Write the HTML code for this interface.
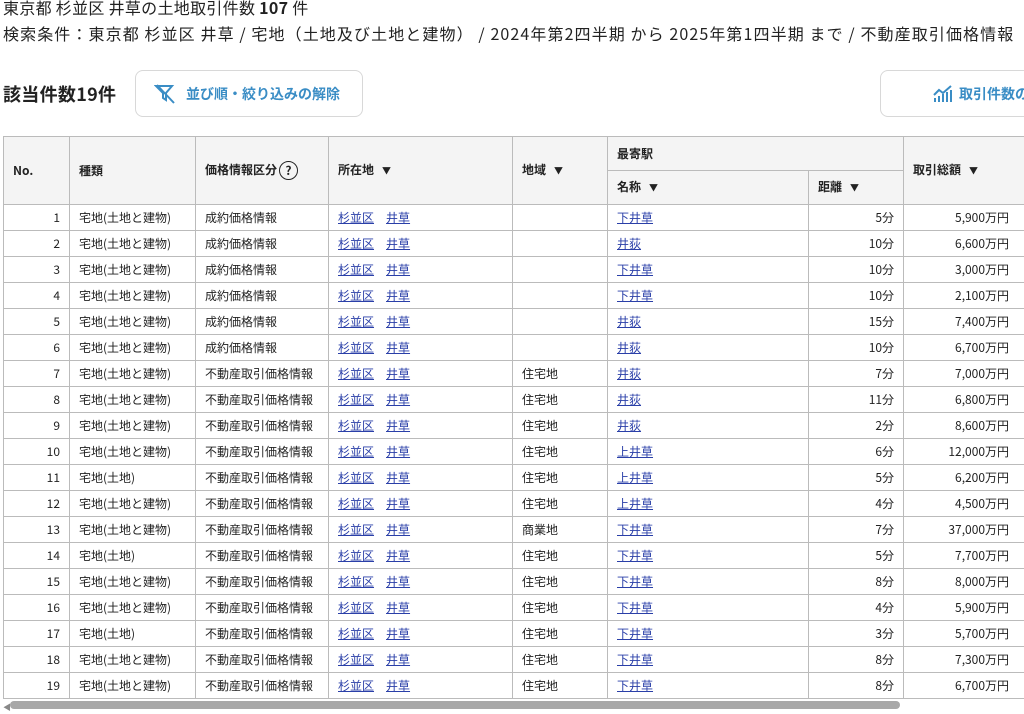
<!DOCTYPE html><html><head><meta charset="utf-8"><style>
body{margin:0;width:1024px;height:714px;overflow:hidden;background:#fff;font-family:"Noto Sans CJK JP","Liberation Sans",sans-serif;color:#222;position:relative}
.t1{position:absolute;left:3px;top:-3px;font-size:16px;line-height:20px;white-space:nowrap;letter-spacing:0.3px}
.t2{position:absolute;left:3px;top:23px;font-size:16px;line-height:20px;white-space:nowrap;letter-spacing:1.1px}
.h{position:absolute;left:3px;top:81px;font-size:18px;font-weight:bold;line-height:26px;letter-spacing:0.3px}
.btn{position:absolute;top:70px;height:47px;border:1px solid #d8d8d8;border-radius:8px;background:#fff;color:#3a8dc5;font-weight:bold;font-size:14px;display:flex;align-items:center;box-sizing:border-box;white-space:nowrap}
table{position:absolute;left:3px;top:136px;width:1022px;border-collapse:collapse;font-size:12px;table-layout:fixed;line-height:16px}
td,th{border:1px solid #bbb;padding:0 9px;height:25px;white-space:nowrap;overflow:hidden}
th{background:#f4f4f4;text-align:left;font-weight:bold;height:33px}
td.r{text-align:right}
td.last{padding-right:16px}
a{color:#2a3fa8;text-decoration:underline}
.c{font-size:9px;margin-left:8px}
.sb{position:absolute;left:10px;top:701px;width:890px;height:8px;background:#a8a8a8;border-radius:4px}
</style></head><body>
<div class="t1">東京都 杉並区 井草の土地取引件数 <b>107</b> 件</div>
<div class="t2">検索条件：東京都 杉並区 井草 / 宅地（土地及び土地と建物） / 2024年第2四半期 から 2025年第1四半期 まで / 不動産取引価格情報</div>
<div class="h">該当件数19件</div>
<div class="btn" style="left:135px;width:228px;padding-left:18px"><svg width="22" height="20" viewBox="0 0 22 20" style="margin-right:10px"><path d="M2 2h16l-6 7v7l-3-2V9z" fill="none" stroke="#3a8dc5" stroke-width="2"/><path d="M3 1l17 18" stroke="#3a8dc5" stroke-width="2"/></svg>並び順・絞り込みの解除</div>
<div class="btn" style="left:880px;width:160px;padding-left:52px"><svg width="20" height="18" viewBox="0 0 20 18" style="margin-right:6px"><path d="M2 17v-4M6 17v-6M10 17v-8M14 17v-10M18 17v-12M1 10l5-5 4 3 8-7" stroke="#3a8dc5" stroke-width="2" fill="none"/></svg>取引件数の</div>
<table>
<colgroup><col style="width:66px"><col style="width:126px"><col style="width:133px"><col style="width:184px"><col style="width:95px"><col style="width:201px"><col style="width:95px"><col style="width:122px"></colgroup>
<tr><th rowspan="2">No.</th><th rowspan="2">種類</th><th rowspan="2">価格情報区分<span style="display:inline-block;width:17px;height:17px;border:1.5px solid #222;border-radius:50%;text-align:center;line-height:17px;font-size:12px;vertical-align:middle;margin-left:2px">?</span></th><th rowspan="2">所在地<span class="c">▼</span></th><th rowspan="2">地域<span class="c">▼</span></th><th colspan="2">最寄駅</th><th rowspan="2">取引総額<span class="c">▼</span></th></tr>
<tr><th>名称<span class="c">▼</span></th><th>距離<span class="c">▼</span></th></tr>
</table>
<script>
var d=[["宅地(土地と建物)","成約価格情報","","下井草",5,"5,900"],["宅地(土地と建物)","成約価格情報","","井荻",10,"6,600"],["宅地(土地と建物)","成約価格情報","","下井草",10,"3,000"],["宅地(土地と建物)","成約価格情報","","下井草",10,"2,100"],["宅地(土地と建物)","成約価格情報","","井荻",15,"7,400"],["宅地(土地と建物)","成約価格情報","","井荻",10,"6,700"],["宅地(土地と建物)","不動産取引価格情報","住宅地","井荻",7,"7,000"],["宅地(土地と建物)","不動産取引価格情報","住宅地","井荻",11,"6,800"],["宅地(土地と建物)","不動産取引価格情報","住宅地","井荻",2,"8,600"],["宅地(土地と建物)","不動産取引価格情報","住宅地","上井草",6,"12,000"],["宅地(土地)","不動産取引価格情報","住宅地","上井草",5,"6,200"],["宅地(土地と建物)","不動産取引価格情報","住宅地","上井草",4,"4,500"],["宅地(土地と建物)","不動産取引価格情報","商業地","下井草",7,"37,000"],["宅地(土地)","不動産取引価格情報","住宅地","下井草",5,"7,700"],["宅地(土地と建物)","不動産取引価格情報","住宅地","下井草",8,"8,000"],["宅地(土地と建物)","不動産取引価格情報","住宅地","下井草",4,"5,900"],["宅地(土地)","不動産取引価格情報","住宅地","下井草",3,"5,700"],["宅地(土地と建物)","不動産取引価格情報","住宅地","下井草",8,"7,300"],["宅地(土地と建物)","不動産取引価格情報","住宅地","下井草",8,"6,700"]];
var t=document.querySelector('table'),h='';
d.forEach(function(r,i){h+='<tr><td class="r">'+(i+1)+'</td><td>'+r[0]+'</td><td>'+r[1]+'</td><td><a>杉並区</a>　<a>井草</a></td><td>'+r[2]+'</td><td><a>'+r[3]+'</a></td><td class="r">'+r[4]+'分</td><td class="r last">'+r[5]+'万円</td></tr>'});
t.insertAdjacentHTML('beforeend',h);
</script>
<div style="position:absolute;left:3px;top:702px;font-size:8px;color:#888">◀</div>
<div class="sb"></div>
</body></html>
